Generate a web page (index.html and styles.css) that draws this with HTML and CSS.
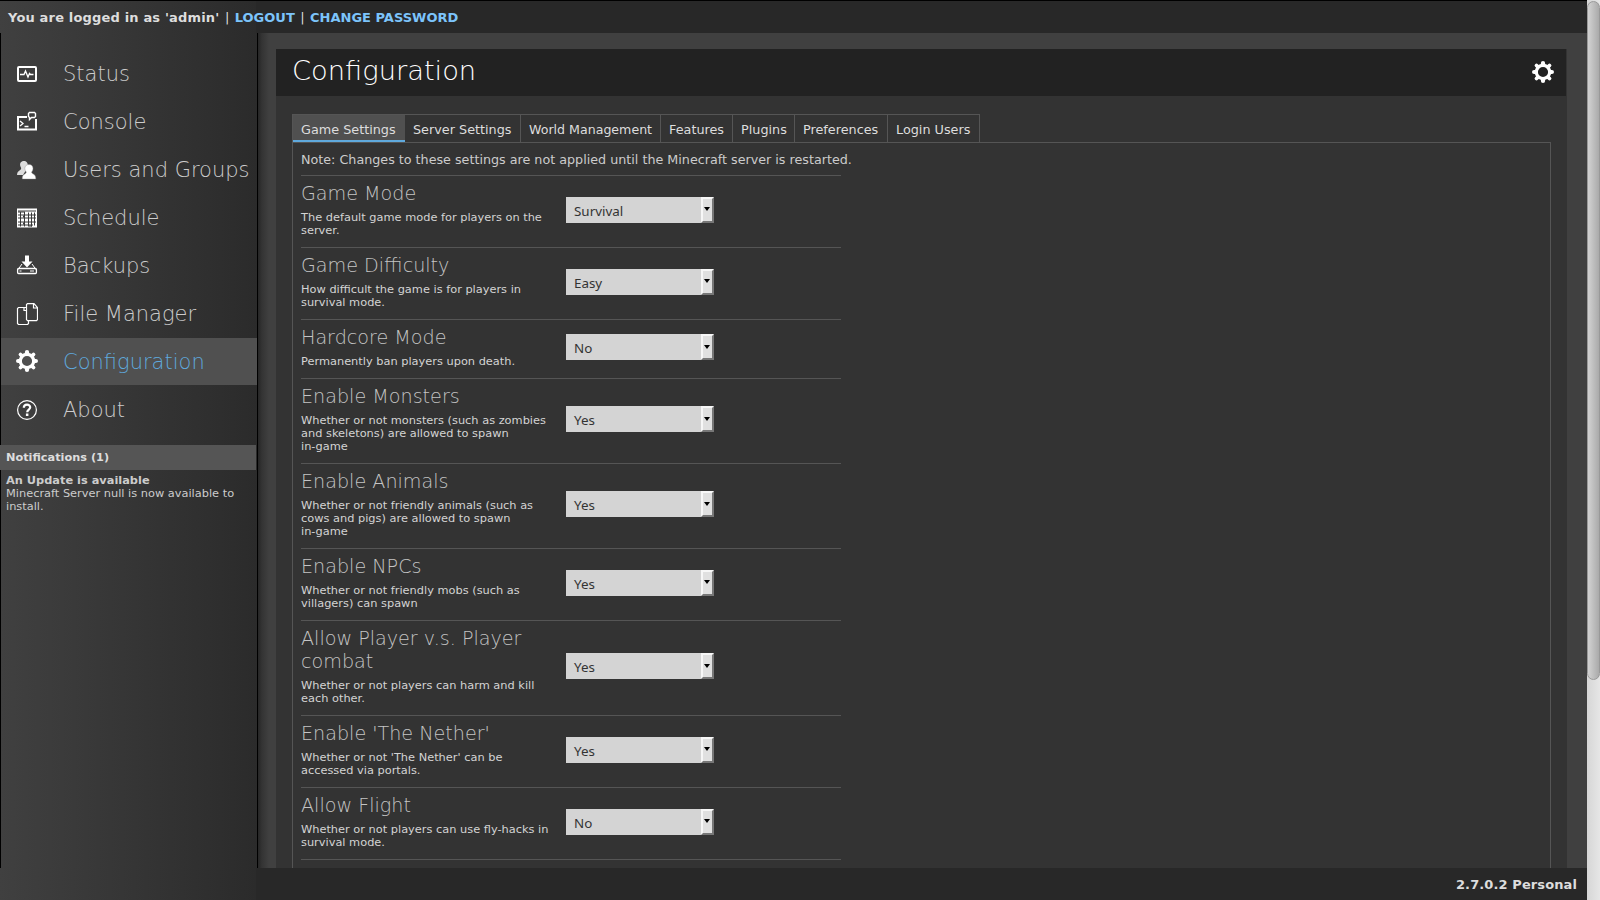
FILE: index.html
```html
<!DOCTYPE html>
<html lang="en">
<head>
<meta charset="utf-8">
<title>Configuration</title>
<link rel="stylesheet" href="styles.css">
</head>
<body>
<svg width="0" height="0" class="defs">
  <symbol id="gear" viewBox="0 0 22 22">
    <circle cx="11" cy="11" r="6.7" fill="none" stroke="#fff" stroke-width="3.2"/>
    <g stroke="#fff" stroke-width="4.2" stroke-linecap="round">
      <path d="M11 2.1V4M11 18v1.9M2.1 11H4M18 11h1.9"/>
      <path stroke-width="3.8" d="M4.5 4.5l1.2 1.2M16.3 16.3l1.2 1.2M4.5 17.5l1.2-1.2M16.3 5.7l1.2-1.2"/>
    </g>
  </symbol>
</svg>
<div class="window">
  <div class="app">
    <header class="topbar"><b class="user">You are logged in as 'admin'</b><span class="bar">|</span><a>LOGOUT</a><span class="bar">|</span><a>CHANGE PASSWORD</a></header>
    <div class="middle">
      <nav class="sidebar">
        <ul class="menu">
          <li><svg class="icon" viewBox="0 0 22 22"><rect x="2" y="4" width="18" height="14" rx="1" fill="none" stroke="#fff" stroke-width="2"/><path d="M4 11.500h4l1.500-3.500 2.500 6 1.500-3.500 1 1h3" fill="none" stroke="#fff" stroke-width="1.300"/></svg><span>Status</span></li>
          <li><svg class="icon" viewBox="0 0 22 22"><path d="M11 6H2v12.500h18V8" fill="none" stroke="#fff" stroke-width="2"/><path d="M4 10l3 2.500-3 2.500M8.500 15.500h4" fill="none" stroke="#fff" stroke-width="1.300"/><path d="M13.500 1.500h5l1 1v3l-1 1h-3l-2 2v-2l-1-1v-3z" fill="none" stroke="#fff" stroke-width="1.400"/></svg><span>Console</span></li>
          <li><svg class="icon" viewBox="0 0 22 22"><path fill="#ddd" d="M8 2c-3.200 0-4.500 2.500-3.700 5 .4 1.500 1.500 2 .5 3.500-1 1-3.500 1.500-3.800 5.500h6l5-8c0-3.500-1-6-4-6z"/><path fill="#fff" stroke="#888" stroke-width=".4" d="M13 5.500c-2.700 0-4.200 1.800-4.200 4 0 1.500.7 2.500 1.300 3.300.5 1-.3 1.700-1.300 2.200-1.800.9-2.700 2-2.500 5h13.500c0-3-.9-4.200-2.500-5-1.200-.5-2-1.200-1.500-2.200.6-.8 1.200-1.800 1.200-3.300 0-2.400-1.500-4-4-4z"/></svg><span>Users and Groups</span></li>
          <li><svg class="icon schedule" viewBox="0 0 22 22"><rect x="1" y="1.500" width="20" height="19" fill="#fff"/><path stroke="#3a3a3a" d="M2 4h18M2 8h18M2 11h18M2 15h18M2 18h15M4.500 4.500v15M8.500 4.500v15M12.500 5.500v14M15.500 5.500v14M18.500 5.500v13"/><path fill="#3a3a3a" d="M2 4.500h2v1H2zM5 4.500h3v1H5zM7 8.500h2v2H7zM7 15.500h2v2H7zM13 18.500h3v1h-3z"/></svg><span>Schedule</span></li>
          <li><svg class="icon" viewBox="0 0 22 22"><path fill="#fff" d="M9 .5h4v6h3.500L11 12.500 5.500 6.500H9z"/><path d="M6 9L2 14.500M16 9l4 5.500" stroke="#fff"/><rect x="1.600" y="13.500" width="18.800" height="5" rx="1" fill="none" stroke="#fff" stroke-width="1.300"/><path d="M3.500 16h2M14 16h4" stroke="#fff"/></svg><span>Backups</span></li>
          <li><svg class="icon" viewBox="0 0 22 22"><path d="M10 4.500H2.500l-1 1v15l1 1h9l1-1V17M8 5v2.500h2" fill="none" stroke="#fff" stroke-width="1.200"/><path d="M11.500.6h6.500l3.500 4v12l-1 1h-9l-1-1v-15zM17.500 1v4h4" fill="none" stroke="#fff" stroke-width="1.200"/></svg><span>File Manager</span></li>
          <li class="active"><svg class="icon"><use href="#gear"/></svg><span>Configuration</span></li>
          <li><svg class="icon" viewBox="0 0 22 22"><circle cx="11" cy="11" r="9.400" fill="none" stroke="#fff" stroke-width="1.200"/><path d="M7.800 8.800c0-4.100 6.400-4.100 6.400-.5 0 2.200-3 2.400-3 4.900" fill="none" stroke="#fff" stroke-width="2.200"/><rect x="9.900" y="14.500" width="2.500" height="2.500" fill="#fff"/></svg><span>About</span></li>
        </ul>
        <div class="notice-head">Notifications (1)</div>
        <div class="notice"><b>An Update is available</b><br>Minecraft Server null is now available to<br>install.</div>
      </nav>
      <main class="content">
        <section class="panel">
          <div class="panel-head"><h1>Configuration</h1><svg class="icon"><use href="#gear"/></svg></div>
          <div class="tabs"><div class="tab on">Game Settings</div><div class="tab t2">Server Settings</div><div class="tab t3">World Management</div><div class="tab t4">Features</div><div class="tab t5">Plugins</div><div class="tab t6">Preferences</div><div class="tab t7">Login Users</div></div>
          <div class="pane">
            <p class="note">Note: Changes to these settings are not applied until the Minecraft server is restarted.</p>
            <div class="row"><div class="label"><h2>Game Mode</h2><p>The default game mode for players on the<br>server.</p></div><div class="select"><span>Survival</span><i></i></div></div>
            <div class="row"><div class="label"><h2>Game Difficulty</h2><p>How difficult the game is for players in<br>survival mode.</p></div><div class="select"><span>Easy</span><i></i></div></div>
            <div class="row"><div class="label"><h2>Hardcore Mode</h2><p>Permanently ban players upon death.</p></div><div class="select"><span>No</span><i></i></div></div>
            <div class="row"><div class="label"><h2>Enable Monsters</h2><p>Whether or not monsters (such as zombies<br>and skeletons) are allowed to spawn<br>in-game</p></div><div class="select"><span>Yes</span><i></i></div></div>
            <div class="row"><div class="label"><h2>Enable Animals</h2><p>Whether or not friendly animals (such as<br>cows and pigs) are allowed to spawn<br>in-game</p></div><div class="select"><span>Yes</span><i></i></div></div>
            <div class="row"><div class="label"><h2>Enable NPCs</h2><p>Whether or not friendly mobs (such as<br>villagers) can spawn</p></div><div class="select"><span>Yes</span><i></i></div></div>
            <div class="row"><div class="label"><h2>Allow Player v.s. Player<br>combat</h2><p>Whether or not players can harm and kill<br>each other.</p></div><div class="select"><span>Yes</span><i></i></div></div>
            <div class="row"><div class="label"><h2>Enable 'The Nether'</h2><p>Whether or not 'The Nether' can be<br>accessed via portals.</p></div><div class="select"><span>Yes</span><i></i></div></div>
            <div class="row"><div class="label"><h2>Allow Flight</h2><p>Whether or not players can use fly-hacks in<br>survival mode.</p></div><div class="select"><span>No</span><i></i></div></div>
            <div class="row"></div>
          </div>
        </section>
      </main>
    </div>
    <footer class="footer"><b>2.7.0.2 Personal</b></footer>
  </div>
  <div class="scrollbar"><div class="thumb"></div></div>
</div>
</body>
</html>
```

FILE: styles.css
```css
* { box-sizing: border-box; }
body { margin: 0; overflow: hidden; background: #282828; color: #ddd; font-family: "DejaVu Sans", sans-serif; font-size: 13px; }
h1, h2, p, ul { margin: 0; padding: 0; font-weight: normal; }
.defs { display: block; }
.window { display: flex; height: 900px; }
.app { flex: 1; display: flex; flex-direction: column; border-top: 1px solid #000; background: linear-gradient(90deg, #404040, #2b2b2b 256px, #282828 256px); }
.topbar { height: 32px; flex: none; display: flex; padding-left: 8px; line-height: 34px; white-space: nowrap; }
.topbar .user { letter-spacing: .17px; }
.topbar a { color: #7cc4fb; font-weight: bold; }
.topbar .bar { width: 15.3px; text-align: center; }
.middle { height: 835px; flex: none; display: flex; }
.sidebar { width: 258px; flex: none; border-left: 1px solid #000; border-right: 1px solid #000; padding-top: 17px; background: linear-gradient(90deg, #404040, #2b2b2b); }
.menu { list-style: none; margin-bottom: 12px; }
.menu li { height: 47px; margin-bottom: 1px; display: flex; align-items: center; padding-left: 15px; font-family: "DejaVu Sans Light", "DejaVu Sans", sans-serif; font-weight: 200; font-size: 21px; color: #ccc; white-space: nowrap; }
.menu .active { background: #505050; color: #5fa9dd; }
.icon { width: 22px; height: 22px; flex: none; display: block; }
.menu .icon { margin-right: 25px; }
.menu .active .icon { margin-bottom: 1px; }
.notice-head { height: 25px; margin-left: -1px; margin-right: 1px; padding-left: 6px; background: #555; font-size: 11.3px; font-weight: bold; line-height: 25px; }
.notice { padding: 4px 0 0 5px; font-size: 11.36px; line-height: 13px; color: #ccc; white-space: nowrap; }
.content { flex: 1; overflow: hidden; padding: 16px 20px 0 18px; background: linear-gradient(90deg, #262626, #343434 4px, #404040 11px); }
.panel { height: 900px; background: #333; }
.panel-head { height: 47px; margin-right: 1px; padding: 0 12px 2px 16px; display: flex; justify-content: space-between; align-items: center; background: #222; }
h1 { font-family: "DejaVu Sans Light", "DejaVu Sans", sans-serif; font-weight: 200; font-size: 27.3px; line-height: 33px; color: #fff; padding-bottom: 3px; }
.tabs { display: flex; width: 688px; height: 28px; margin: 18px 0 0 16px; border: 1px solid #555; border-bottom: 0; }
.tab { border-right: 1px solid #555; padding-left: 8px; font-size: 12.8px; line-height: 29px; white-space: nowrap; }
.tab.on { width: 112px; border-right: 0; border-bottom: 2px solid #5fa9dd; background: #505050; }
.t2 { width: 116px; } .t3 { width: 140px; font-size: 12.6px; } .t4 { width: 72px; } .t5 { width: 62px; } .t6 { width: 93px; } .t7 { border: 0; }
.pane { margin: 0 16px 0 16px; height: 800px; border: 1px solid #555; padding-left: 8px; }
.note { height: 32px; font-size: 12.73px; line-height: 33px; white-space: nowrap; color: #ccc; }
.row { width: 540px; border-top: 1px solid #555; display: flex; align-items: center; }
.label { width: 265px; padding: 6px 0 10px; white-space: nowrap; }
h2 { font-family: "DejaVu Sans Light", "DejaVu Sans", sans-serif; font-weight: 200; font-size: 19.15px; line-height: 23px; color: #c4c4c4; }
.label p { margin-top: 6px; font-size: 11.36px; line-height: 13px; color: #d4d4d4; }
.select { width: 148px; height: 26px; margin-bottom: 3.9px; display: flex; background: #d4d4d4; color: #333; font-family: "Noto Sans", sans-serif; font-size: 13.4px; line-height: 28px; }
.select span { flex: 1; padding-left: 8px; }
.select i { width: 13px; border: 2px solid; border-color: #f7f7f7 #777 #777 #f7f7f7; background: #e0e0e0; display: flex; align-items: center; justify-content: center; }
.select i::after { content: ""; margin: 0 1px 1px 0; border: 3px solid transparent; border-top: 4px solid #000; border-bottom: 0; }
.footer { flex: 1; padding-right: 10px; line-height: 34px; letter-spacing: .1px; text-align: right; }
.scrollbar { width: 13px; flex: none; background: linear-gradient(90deg, #d6d6d6, #e6e6e6); }
.thumb { margin-top: 1px; height: 679px; border: 1px solid #999; border-radius: 7px; background: linear-gradient(90deg, #d2d2d2, #aaa); }
```
